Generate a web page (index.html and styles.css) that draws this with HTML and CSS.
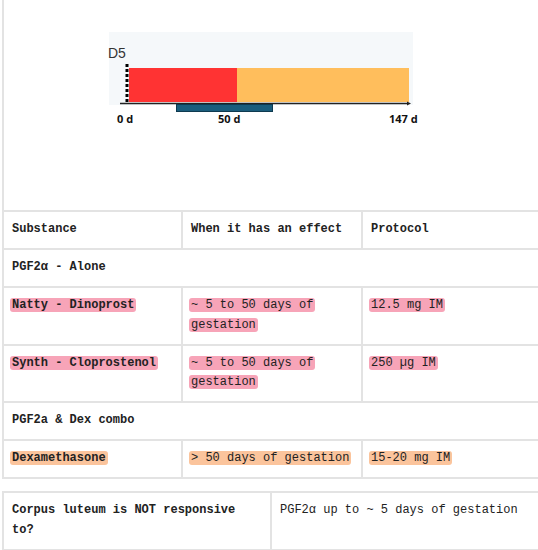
FILE: index.html
```html
<!DOCTYPE html>
<html lang="en">
<head>
    <meta charset="UTF-8">
    <title>Prostaglandin protocols</title>
    <link rel="stylesheet" href="styles.css">
</head>
<body>
    <div class="page">
        <div class="chart-box">
            <svg class="timeline" width="330" height="100" viewBox="0 0 330 100">
                <rect x="7" y="2" width="304" height="73" fill="#f5f8fa"/>
                <text x="6" y="28" class="d5">D5</text>
                <rect x="27" y="38" width="108" height="34" fill="#ff3333"/>
                <rect x="135" y="38" width="172" height="34" fill="#ffbe5c"/>
                <line x1="25" y1="34" x2="25" y2="72" stroke="#000" stroke-width="3" stroke-dasharray="3 2"/>
                <line x1="18" y1="73.5" x2="306" y2="73.5" stroke="#222" stroke-width="1.3"/>
                <polygon points="305,71.5 309,73.5 305,75.5" fill="#222"/>
                <rect x="74.5" y="74.5" width="96" height="7" fill="#1b5d7c" stroke="#0e3a50" stroke-width="1"/>
                <text x="15" y="93" class="tick">0 d</text>
                <text x="116" y="93" class="tick">50 d</text>
                <text x="287" y="93" class="tick">147 d</text>
            </svg>
        </div>
        <table class="grid main">
            <tr>
                <th class="c1">Substance</th>
                <th class="c2">When it has an effect</th>
                <th class="c3">Protocol</th>
            </tr>
            <tr>
                <th colspan="3">PGF2α - Alone</th>
            </tr>
            <tr>
                <td><strong class="mark pink">Natty - Dinoprost</strong></td>
                <td><span class="mark pink">~ 5 to 50 days of gestation</span></td>
                <td><span class="mark pink">12.5 mg IM</span></td>
            </tr>
            <tr>
                <td><strong class="mark pink">Synth - Cloprostenol</strong></td>
                <td><span class="mark pink">~ 5 to 50 days of gestation</span></td>
                <td><span class="mark pink">250 µg IM</span></td>
            </tr>
            <tr>
                <th colspan="3">PGF2a &amp; Dex combo</th>
            </tr>
            <tr>
                <td><strong class="mark peach">Dexamethasone</strong></td>
                <td><span class="mark peach">&gt; 50 days of gestation</span></td>
                <td><span class="mark peach">15-20 mg IM</span></td>
            </tr>
        </table>
        <table class="grid extra">
            <tr>
                <th class="q">Corpus luteum is NOT responsive to?</th>
                <td>PGF2α up to ~ 5 days of gestation</td>
            </tr>
        </table>
    </div>
</body>
</html>
```

FILE: styles.css
```css
body {
    margin: 0;
    overflow: hidden;
    background: #fff;
    color: #222;
    font-family: "Liberation Mono", "Courier New", monospace;
    font-size: 12px;
}
.page {
    width: 560px;
    padding-left: 2px;
}
.chart-box {
    height: 210px;
    box-sizing: border-box;
    border-left: 2px solid #e3e3e3;
    padding: 30px 0 0 98px;
}
.timeline {
    display: block;
}
.d5 {
    font-family: "Liberation Sans", Arial, sans-serif;
    font-size: 14px;
    fill: #333;
}
.tick {
    font-family: "Open Sans", "DejaVu Sans", sans-serif;
    font-weight: bold;
    font-size: 11px;
    fill: #111;
}
.grid {
    border-collapse: collapse;
    table-layout: fixed;
}
.grid th,
.grid td {
    border: 2px solid #e3e3e3;
    padding: 8px 8px 8.5px;
    line-height: 19.5px;
    text-align: left;
    vertical-align: top;
}
.grid th {
    font-weight: bold;
}
.main {
    width: 560px;
}
.main .c1 {
    width: 161px;
}
.main .c2 {
    width: 162px;
}
.extra {
    width: 560px;
    margin-top: 12px;
}
.extra .q {
    width: 250px;
}
.mark {
    padding: 0 2px;
    margin-left: -2px;
    border-radius: 3px;
    box-decoration-break: clone;
    -webkit-box-decoration-break: clone;
}
.pink {
    background: #f7a4b8;
}
.peach {
    background: #fbc49c;
}
```
